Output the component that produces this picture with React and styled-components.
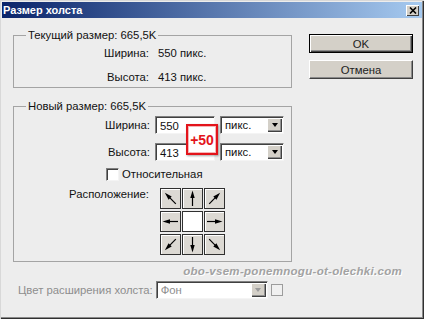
import React from 'react';
import styled, { createGlobalStyle } from 'styled-components';

const Global = createGlobalStyle`
  html, body { margin: 0; padding: 0; background: #ededed; }
  body { font-family: "Liberation Sans", Arial, sans-serif; font-size: 11.3px; line-height: 14px; color: #111; }
  * { box-sizing: border-box; }
`;

const Window = styled.div`
  width: 424px;
  height: 319px;
  background: #ededed;
  display: flex;
  flex-direction: column;
  padding: 2px;
  box-shadow: inset 1px 1px 0 #d8d8d8, inset -1px -1px 0 #303030, inset -2px -2px 0 #8a8a8a;
`;

const TitleBar = styled.div`
  height: 16px;
  background: linear-gradient(90deg, #0a246a 0%, #a6caf0 100%);
  display: flex;
  align-items: center;
  justify-content: space-between;
  padding: 0 3px 0 1px;
`;

const TitleText = styled.span`
  color: #fff;
  font-weight: bold;
  font-size: 11px;
`;

const CloseButton = styled.div`
  width: 13px;
  height: 11px;
  background: #d4d0c8;
  box-shadow: inset 1px 1px 0 #fff, inset -1px -1px 0 #404040;
  display: flex;
  align-items: center;
  justify-content: center;
`;

const Main = styled.div`
  display: grid;
  grid-template-columns: 279px 104px;
  column-gap: 17px;
  padding: 10px 0 0 11px;
`;

const LeftColumn = styled.div`
  display: flex;
  flex-direction: column;
  gap: 11px;
`;

const Group = styled.fieldset`
  margin: 0;
  padding: 0 0 ${p => p.$pb || 0}px 0;
  border: 1px solid #a4a4a4;
  min-width: 0;
`;

const Legend = styled.legend`
  margin-left: 12px;
  padding: 0 2px;
  line-height: 14px;
`;

const InfoGrid = styled.div`
  display: grid;
  grid-template-columns: 135px auto;
  column-gap: 9px;
  row-gap: 10px;
  padding: 4px 0 3px 0;
`;

const Label = styled.span`
  justify-self: end;
  align-self: center;
  color: ${p => (p.$disabled ? '#8e8e8e' : '#111')};
`;

const SizeGrid = styled.div`
  position: relative;
  display: grid;
  grid-template-columns: 136px 60px 64px;
  column-gap: 5px;
  row-gap: 9px;
  padding-top: 3px;
`;

const sunken = `
  background: #fff;
  border: 1px solid;
  border-color: #808080 #f4f4f4 #f4f4f4 #808080;
  box-shadow: inset 1px 1px 0 #404040;
`;

const TextInput = styled.div`
  ${sunken}
  height: 18px;
  padding: 1px 0 0 4px;
  display: flex;
  align-items: center;
`;

const Select = styled.div`
  ${sunken}
  height: 18px;
  width: ${p => p.$w}px;
  flex: none;
  display: flex;
  align-items: center;
  padding: 1px 1px 1px 4px;
  color: ${p => (p.$disabled ? '#8e8e8e' : '#111')};
`;

const SelectText = styled.span`
  flex: 1;
`;

const DropButton = styled.div`
  width: 15px;
  height: 14px;
  background: #d4d0c8;
  box-shadow: inset 1px 1px 0 #fff, inset -1px -1px 0 #404040, inset -2px -2px 0 #909090;
  display: flex;
  align-items: center;
  justify-content: center;
`;

const Triangle = styled.div`
  width: 0;
  height: 0;
  border-left: 3.5px solid transparent;
  border-right: 3.5px solid transparent;
  border-top: 4px solid ${p => (p.$disabled ? '#9a9a9a' : '#000')};
`;

const Badge = styled.div`
  position: absolute;
  left: 172px;
  top: 11px;
  width: 32px;
  height: 31px;
  background: #fff;
  border: 2px solid #e3141b;
  box-shadow: 1px 1px 2px rgba(0, 0, 0, 0.35), inset 0 0 0 1px #f6b5b7;
  color: #e3141b;
  font-weight: bold;
  font-size: 14px;
  display: flex;
  align-items: center;
  justify-content: center;
`;

const CheckRow = styled.div`
  display: flex;
  align-items: center;
  gap: 3px;
  margin-top: 6px;
  padding-left: 92px;
  height: 14px;
`;

const CheckBox = styled.div`
  ${sunken}
  width: 13px;
  height: 13px;
  flex: none;
`;

const LocationRow = styled.div`
  display: grid;
  grid-template-columns: 135px auto;
  column-gap: 11px;
  margin-top: 7px;
`;

const LocationLabel = styled.span`
  justify-self: end;
  margin-top: -1px;
`;

const AnchorGrid = styled.div`
  display: grid;
  grid-template-columns: repeat(3, 21px);
  grid-template-rows: repeat(3, 21px);
  column-gap: 1px;
  row-gap: 2px;
`;

const AnchorCell = styled.div`
  border: 1px solid #303030;
  background: ${p => (p.$center ? '#fff' : '#dcd9d3')};
  box-shadow: ${p => (p.$center ? 'none' : 'inset 1px 1px 0 #fff')};
  display: flex;
  align-items: center;
  justify-content: center;
`;

const RightColumn = styled.div`
  display: flex;
  flex-direction: column;
  gap: 7px;
  margin-top: 6px;
`;

const Button = styled.div`
  height: 19px;
  background: #d4d0c8;
  display: flex;
  align-items: center;
  justify-content: center;
  color: #222;
  border: 1px solid #000;
  box-shadow: inset 1px 1px 0 #fff, inset -1px -1px 0 #404040, inset -2px -2px 0 #8a8a8a;
  ${p => (p.$default ? '' : 'border-color: #fff #404040 #404040 #fff; box-shadow: inset -1px -1px 0 #8a8a8a;')}
`;

const WatermarkRow = styled.div`
  display: flex;
  justify-content: flex-end;
  padding-right: 20px;
  margin-top: 2px;
  height: 14px;
`;

const Watermark = styled.span`
  font-style: italic;
  font-weight: bold;
  font-size: 11.5px;
  color: #a2a2a2;
  text-shadow: 1px 1px 0 #fff;
  letter-spacing: 0.3px;
`;

const BottomRow = styled.div`
  display: flex;
  align-items: center;
  gap: 3px;
  padding-left: 16px;
  margin-top: 3px;
`;

const DisabledBox = styled.div`
  width: 12px;
  height: 12px;
  flex: none;
  border: 1px solid #9c9c9c;
  background: #f0f0f0;
`;

const Arrow = ({ angle }) => (
  <svg width="19" height="19" viewBox="0 0 19 19">
    <g transform={`rotate(${angle} 9.5 9.5)`}>
      <line x1="9.5" y1="8" x2="9.5" y2="17" stroke="#000" strokeWidth="1.2" />
      <polygon points="9.5,1.5 7.3,9 11.7,9" fill="#000" />
    </g>
  </svg>
);

const anchors = [-45, 0, 45, -90, null, 90, -135, 180, 135];

export default function App() {
  return (
    <>
      <Global />
      <Window>
        <TitleBar>
          <TitleText>Размер холста</TitleText>
          <CloseButton>
            <svg width="8" height="7" viewBox="0 0 8 7">
              <path d="M1 0.5 L7 6.5 M7 0.5 L1 6.5" stroke="#000" strokeWidth="1.6" />
            </svg>
          </CloseButton>
        </TitleBar>
        <Main>
          <LeftColumn>
            <Group>
              <Legend>Текущий размер: 665,5K</Legend>
              <InfoGrid>
                <Label>Ширина:</Label>
                <span>550 пикс.</span>
                <Label>Высота:</Label>
                <span>413 пикс.</span>
              </InfoGrid>
            </Group>
            <Group $pb={6}>
              <Legend>Новый размер: 665,5K</Legend>
              <SizeGrid>
                <Label>Ширина:</Label>
                <TextInput>550</TextInput>
                <Select $w={64}>
                  <SelectText>пикс.</SelectText>
                  <DropButton><Triangle /></DropButton>
                </Select>
                <Label>Высота:</Label>
                <TextInput>413</TextInput>
                <Select $w={64}>
                  <SelectText>пикс.</SelectText>
                  <DropButton><Triangle /></DropButton>
                </Select>
                <Badge>+50</Badge>
              </SizeGrid>
              <CheckRow>
                <CheckBox />
                <span>Относительная</span>
              </CheckRow>
              <LocationRow>
                <LocationLabel>Расположение:</LocationLabel>
                <AnchorGrid>
                  {anchors.map((a, i) => (
                    <AnchorCell key={i} $center={a === null}>
                      {a !== null && <Arrow angle={a} />}
                    </AnchorCell>
                  ))}
                </AnchorGrid>
              </LocationRow>
            </Group>
          </LeftColumn>
          <RightColumn>
            <Button $default>OK</Button>
            <Button>Отмена</Button>
          </RightColumn>
        </Main>
        <WatermarkRow>
          <Watermark>obo-vsem-ponemnogu-ot-olechki.com</Watermark>
        </WatermarkRow>
        <BottomRow>
          <Label $disabled>Цвет расширения холста:</Label>
          <Select $w={112} $disabled>
            <SelectText>Фон</SelectText>
            <DropButton><Triangle $disabled /></DropButton>
          </Select>
          <DisabledBox />
        </BottomRow>
      </Window>
    </>
  );
}
